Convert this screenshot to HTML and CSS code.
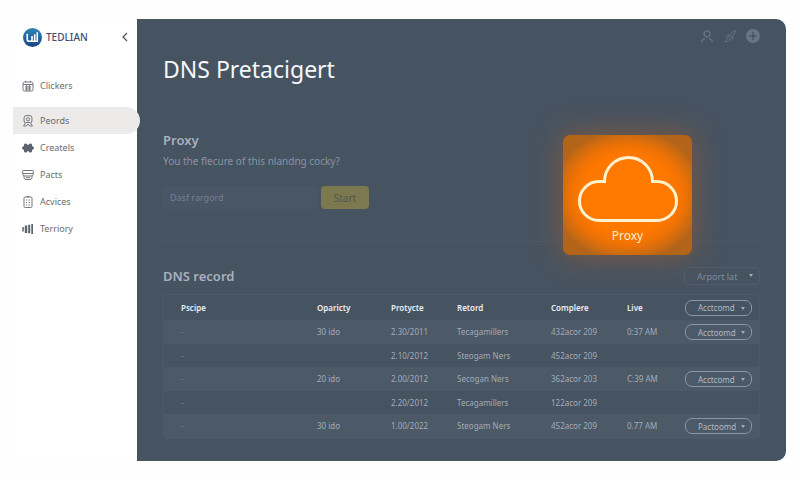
FILE: index.html
```html
<!DOCTYPE html>
<html lang="en">
<head>
  <meta charset="UTF-8" />
  <meta name="viewport" content="width=device-width, initial-scale=1" />
  <title>DNS Pretacigert | Tedlian</title>
  <link rel="stylesheet" href="styles.css">
</head>
<body>
  <div class="app">
    <aside class="sidebar">
      <div class="brand">
        <svg class="logo" viewBox="0 0 20 20" aria-hidden="true">
          <defs>
            <linearGradient id="logoFill" x1="0" y1="0" x2="0" y2="1">
              <stop offset="0" stop-color="#2d86b5" />
              <stop offset="1" stop-color="#1b4384" />
            </linearGradient>
          </defs>
          <circle cx="10" cy="10" r="10" fill="url(#logoFill)" />
          <path d="M4.500 6v6q0 2 2 2h1.200q1.800 0 1.800-2V8.500M12.300 6.500V14M15 4.500V14H9" fill="none" stroke="#fff" stroke-width="1.700" />
        </svg>
        <span class="brandName">TEDLIAN</span>
        <button class="collapseBtn" aria-label="Collapse menu">
          <svg viewBox="0 0 8 10" fill="none" stroke="#4b5260" stroke-width="1.200"><path d="M6 1L2 5l4 4" /></svg>
        </button>
      </div>

      <nav class="menu">
        <a href="#clickers" class="menuItem first">
          <svg class="lineIcon" viewBox="0 0 12 12"><path d="M1 3.500q0-1.500 1.500-1.500h7q1.500 0 1.500 1.500v6q0 1.500-1.500 1.500h-7Q1 11 1 9.500zM1 4.500h10M3.500 .8v1.500M8.500 .8v1.500M3 7h6M3 9h6M4.700 5v6M7.500 5v6" /></svg>
          Clickers
        </a>
        <a href="#peords" class="menuItem active">
          <svg class="lineIcon" viewBox="0 0 12 12"><path d="M3 8Q1.600 6.500 2 3Q2.200 .6 4 .6h4Q9.800 .6 10 3q.4 3.500-1 5" /><circle cx="6" cy="4.300" r="1.600" /><path d="M3.800 7.500L1.500 11h2.800L6 9l1.700 2h2.800L8.200 7.500M4 7.500h4" /></svg>
          Peords
        </a>
        <a href="#createls" class="menuItem">
          <svg class="solidIcon" viewBox="0 0 12 12"><path d="M2.500 1.800Q4 .8 5 2.300q1 1.200 2 0Q8 .8 9.500 1.800q.8 1 .5 2.200Q12 4.500 12 6t-2 2q.3 1.200-.5 2.200Q8 11.200 7 9.700q-1-1.200-2 0Q4 11.200 2.500 10.200 1.700 9.200 2 8 0 7.500 0 6t2-2Q1.700 2.800 2.500 1.800z" /></svg>
          Createls
        </a>
        <a href="#pacts" class="menuItem">
          <svg class="lineIcon" viewBox="0 0 12 12"><path d="M1.300 1.500h9.400q.6 0 .6.600v2.700q0 2.200-2.200 2.200H3Q.7 7 .7 4.800V2.100q0-.6.600-.6zM.7 4.500h10.600M2 7v1.500Q2 10.500 4 10.500h4q2 0 2-2V7M4 8.700h4" /></svg>
          Pacts
        </a>
        <a href="#acvices" class="menuItem">
          <svg class="lineIcon" viewBox="0 0 12 12"><rect x="2" y="1" width="8" height="10.500" rx="1.200" /><path d="M4.500 .6h3M4 4h1M6.500 4H8M4 6.500h1M6.500 6.500H8M4 9h1M6.500 9H8" /></svg>
          Acvices
        </a>
        <a href="#terriory" class="menuItem">
          <svg class="solidIcon" viewBox="0 0 12 12"><path d="M.3 4h1.500v4.500H.3zM2.800 2.500h2.400v7.500H2.800zM6.200 1.800h2v8.500h-2zM9.300 1H11v10H9.300z" /></svg>
          Terriory
        </a>
      </nav>
    </aside>

    <main class="content">
      <div class="toolbar">
        <button aria-label="Account">
          <svg viewBox="0 0 14 14" fill="none" stroke="currentColor" stroke-width="1.300"><circle cx="7" cy="4.800" r="3" /><path d="M2 13v-1.500L5 9.300M12 13v-1.500L9 9.300" /></svg>
        </button>
        <button aria-label="Tools">
          <svg viewBox="0 0 14 14" fill="none" stroke="currentColor"><path d="M2 12.500L9.500 3q2-1.800 2.800-1.300.4 1-.8 2.800L5 12.300q-1.500 1-3 .2M2.500 8q1.500-2.500 4-1.300M9.500 7q1.500 2-1 4.500" /></svg>
        </button>
        <button aria-label="Add">
          <svg viewBox="0 0 14 14"><circle cx="7" cy="7" r="7" fill="currentColor" /><path d="M7 3v8M3.500 7h7" stroke="#465361" stroke-width="1.400" /></svg>
        </button>
      </div>

      <h1>DNS Pretacigert</h1>

      <section class="proxy">
        <h2>Proxy</h2>
        <p><label for="proxyInput">You the flecure of this nlandng cocky?</label></p>
        <form class="proxyForm">
          <input type="text" id="proxyInput" placeholder="Dasf rargord">
          <button type="button" class="startBtn">Start</button>
        </form>
      </section>

      <!-- Glowing card that floats over the divider -->
      <button class="proxyCard">
        <svg viewBox="0 0 100 68" aria-hidden="true">
          <path d="M21 65.500A19.500 19.500 0 0 1 21 26.500H26.500A24 24 0 0 1 74.500 26.500H79A19.500 19.500 0 0 1 79 65.500Z" />
        </svg>
        <span>Proxy</span>
      </button>

      <section class="records">
        <div class="recordsHead">
          <h2>DNS record</h2>
          <div class="picker exportPicker">
            <select aria-label="Export list"><option>Arport lat</option></select>
          </div>
        </div>

        <table>
          <colgroup>
            <col>
            <col class="colOparicty">
            <col class="colDate">
            <col class="colRetord">
            <col class="colComplere">
            <col class="colLive">
            <col class="colAction">
          </colgroup>
          <thead>
            <tr>
              <th>Pscipe</th>
              <th>Oparicty</th>
              <th>Protycte</th>
              <th>Retord</th>
              <th>Complere</th>
              <th>Live</th>
              <th><div class="picker"><select aria-label="All records"><option>Acctcomd</option></select></div></th>
            </tr>
          </thead>
          <tbody>
            <tr>
              <td>-</td><td>30 ido</td><td>2.30/2011</td><td>Tecagamillers</td><td>432acor 209</td><td>0:37 AM</td>
              <td><div class="picker"><select aria-label="Record 1"><option>Acctoomd</option></select></div></td>
            </tr>
            <tr>
              <td>-</td><td></td><td>2.10/2012</td><td>Steogam Ners</td><td>452acor 209</td><td></td><td></td>
            </tr>
            <tr>
              <td>-</td><td>20 ido</td><td>2.00/2012</td><td>Secogan Ners</td><td>362acor 203</td><td>C:39 AM</td>
              <td><div class="picker"><select aria-label="Record 3"><option>Acctcomd</option></select></div></td>
            </tr>
            <tr>
              <td>-</td><td></td><td>2.20/2012</td><td>Tecagamillers</td><td>122acor 209</td><td></td><td></td>
            </tr>
            <tr>
              <td>-</td><td>30 ido</td><td>1.00/2022</td><td>Steogam Ners</td><td>452acor 209</td><td>0.77 AM</td>
              <td><div class="picker"><select aria-label="Record 5"><option>Pactoomd</option></select></div></td>
            </tr>
          </tbody>
        </table>
      </section>
    </main>
  </div>
</body>
</html>
```
FILE: styles.css
```css
/* Basic Reset */
* {
  box-sizing: border-box;
  margin: 0;
  padding: 0;
}
body {
  font-family: "Noto Sans", "Open Sans", sans-serif;
  background-color: #fefefe;
  padding: 19px 14px 19px 13px;
}
button, input, select {
  font-family: inherit;
  border: none;
  background: none;
}
button {
  cursor: pointer;
}
svg {
  display: block;
}
.app {
  display: flex;
}

/* Sidebar */
.sidebar {
  width: 124px;
  flex-shrink: 0;
  background-color: #fff;
}
.brand {
  display: flex;
  align-items: center;
  height: 36px;
  padding: 0 8px 0 10px;
}
.logo {
  width: 19px;
  height: 19px;
}
.brandName {
  margin-left: 4px;
  font-size: 10px;
  font-weight: 500;
  color: #3c4e72;
}
.collapseBtn {
  margin-left: auto;
}
.collapseBtn svg {
  width: 8px;
  height: 10px;
}
.menu {
  padding-top: 17px;
}
.menuItem {
  display: flex;
  align-items: center;
  gap: 6px;
  height: 27px;
  padding-left: 9px;
  font-size: 9px;
  color: #6a6c70;
  text-decoration: none;
}
.menuItem.first {
  margin-bottom: 8px;
}
.menuItem.active {
  position: relative;
  z-index: 1;
  margin-right: -3px;
  background-color: #ecebea;
  border-radius: 0 14px 14px 0;
}
.menuItem svg {
  width: 12px;
  height: 12px;
}
.lineIcon {
  fill: none;
  stroke: #74777e;
}
.solidIcon {
  fill: #5c616b;
}

/* Main panel */
.content {
  position: relative;
  flex: 1;
  min-width: 0;
  padding: 10px 26px 22px;
  background-color: #465361;
  border-radius: 0 10px 10px 0;
  color: #a9b1bf;
}
.toolbar {
  display: flex;
  justify-content: flex-end;
  gap: 9px;
}
.toolbar button {
  color: #687482;
}
.toolbar svg {
  width: 14px;
  height: 14px;
}
h1 {
  margin-top: 10px;
  font-size: 23px;
  font-weight: 400;
  line-height: 32px;
  color: #f5f7fa;
}
h2 {
  font-size: 13px;
  font-weight: 600;
  line-height: 18px;
}
.proxy {
  padding: 46px 0 32px;
  border-bottom: 1px solid #4b5867;
}
.proxy p {
  margin: 5px 0 18px;
  font-size: 10px;
  line-height: 14px;
  color: #8a94a3;
}
.proxyForm {
  display: flex;
  gap: 4px;
}
.proxyForm input {
  width: 154px;
  height: 23px;
  padding: 0 7px;
  border-radius: 3px;
  background-color: #495665;
  font-size: 9px;
  color: #c5ccd6;
}
.proxyForm input::placeholder {
  color: #748090;
}
.startBtn {
  width: 48px;
  height: 23px;
  border-radius: 4px;
  background-color: #7c7850;
  font-size: 10px;
  color: #4f5750;
}

/* Orange proxy card */
.proxyCard {
  position: absolute;
  top: 116px;
  right: 94px;
  display: flex;
  flex-direction: column;
  align-items: center;
  justify-content: flex-end;
  gap: 4px;
  width: 129px;
  height: 120px;
  padding-bottom: 10px;
  border-radius: 7px;
  background: radial-gradient(76px 66px at 50% 50%, #ff7a00 0%, #ff7800 60%, #ee7206 76%, #c96a12 92%, #b26419 100%);
  box-shadow: 0 0 32px rgba(225, 100, 10, 0.4);
  font-size: 12px;
  line-height: 18px;
  color: #ffefd2;
}
.proxyCard svg {
  width: 100px;
  height: 68px;
  fill: none;
  stroke: #fff3cf;
  stroke-width: 3px;
  filter: drop-shadow(0 0 7px #ff7a00);
}

/* DNS records */
.records {
  padding-top: 25px;
}
.recordsHead {
  display: flex;
  align-items: center;
  justify-content: space-between;
  height: 18px;
  margin-bottom: 9px;
}
.picker {
  position: relative;
  width: 67px;
}
.picker select {
  display: block;
  width: 100%;
  height: 16px;
  padding: 0 12px;
  border: 1px solid #8c96a4;
  border-radius: 7px;
  appearance: none;
  font-size: 8px;
  color: #b2bac6;
}
.picker::after {
  content: "";
  position: absolute;
  top: 7px;
  right: 7px;
  border: 2px solid transparent;
  border-top: 3px solid #a3acb9;
  border-bottom: none;
}
.exportPicker {
  width: 76px;
}
.exportPicker select {
  height: 18px;
  border-color: #4f5c6b;
  border-radius: 4px;
  font-size: 9px;
  color: #7f8b9a;
}
table {
  width: 100%;
  table-layout: fixed;
  border-collapse: separate;
  border-spacing: 0;
  border: 1px solid #4d5a69;
  border-radius: 4px;
  overflow: hidden;
  font-size: 8px;
  line-height: 12px;
}
.colOparicty { width: 74px; }
.colDate { width: 66px; }
.colRetord { width: 94px; }
.colComplere { width: 76px; }
.colLive { width: 58px; }
.colAction { width: 74px; }
th, td {
  height: 23px;
  text-align: left;
  vertical-align: middle;
  white-space: nowrap;
}
th {
  height: 25px;
  font-weight: 600;
  color: #eceff3;
}
th:first-child, td:first-child {
  padding-left: 17px;
}
tbody tr:nth-child(odd) td {
  height: 24px;
  background-color: #4c5967;
}
td {
  color: #a3acb9;
}
td:first-child {
  color: #7b8796;
}
```
